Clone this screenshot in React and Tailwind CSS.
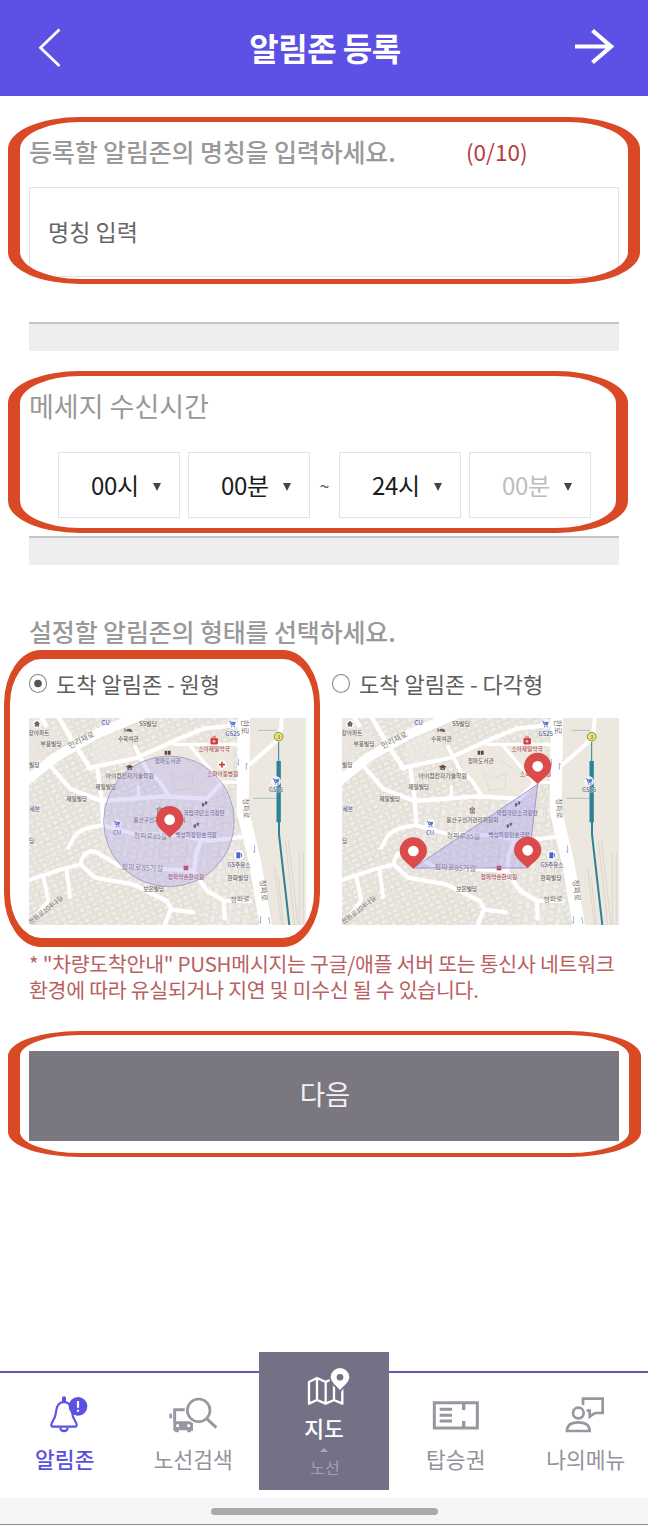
import React from "react";

const MAP_LABELS = [
  ["장아파트", 57, 68, 17, "#66605c"],
  ["부용빌딩", 93, 100, 17, "#66605c"],
  ["CU", 257, 37, 19, "#5561b5"],
  ["SS빌딩", 384, 41, 18, "#66605c"],
  ["수복여관", 325, 86, 17, "#66605c"],
  ["GS25", 638, 70, 18, "#5561a5"],
  ["소아제일약국", 582, 115, 17, "#a8504c"],
  ["청파도서관", 443, 153, 17, "#66605c"],
  ["소화아동병원", 608, 191, 17, "#a8504c"],
  ["아이컴전자기술학원", 329, 196, 17.5, "#66605c"],
  ["제일빌딩", 257, 231, 17, "#66605c"],
  ["제일빌딩", 170, 265, 17, "#66605c"],
  ["빌딩", 43, 163, 17, "#66605c"],
  ["세븐", 44, 297, 17, "#5a5f80"],
  ["국립극단소극장판", 552, 309, 17, "#5b5570"],
  ["용산구선거관리위원회", 418, 329, 17, "#66605c"],
  ["백성희장민호극장", 528, 373, 17, "#5b5570"],
  ["CU", 291, 368, 18, "#5561a5"],
  ["딩", 35, 392, 17, "#66605c"],
  ["청파약손한의원", 498, 499, 17, "#a0484f"],
  ["보은빌딩", 401, 537, 17, "#66605c"],
  ["GS주유소", 657, 463, 17, "#5a5f80"],
  ["한화빌딩", 654, 504, 17, "#66605c"],
  ["GS25", 768, 239, 17, "#5a5f80"],
];

const ROAD_LABELS = [
  ["만리재로", 184, 89, 23, -27],
  ["청파로85길", 391, 377, 21, 3],
  ["청파로85가길", 367, 472, 22, 3],
  ["청파로", 660, 567, 21, -4],
  ["한로", 676, 50, 24, 90],
  ["청파로", 678, 294, 22, 88],
  ["청파로", 731, 540, 23, 84],
  ["청원로104나길", 77, 599, 20, -38],
];

function Cart({ x, y }) {
  return (
    <g transform={`translate(${x} ${y})`}>
      <circle r="15" fill="#fff" opacity="0.85" />
      <path d="M-10 -8h4l3 11h9M-5 -5H9L6 2H-3z" fill="#4e66cf" stroke="#4e66cf" strokeWidth="2" />
      <circle cx="-2" cy="8" r="2" fill="#4e66cf" />
      <circle cx="6" cy="8" r="2" fill="#4e66cf" />
    </g>
  );
}

function Pin({ x, y }) {
  return (
    <g transform={`translate(${x} ${y})`}>
      <path d="M0 0C-10 -14 -41 -28 -41 -54A41 41 0 0 1 41 -54C41 -28 10 -14 0 0Z" fill="#db4b4b" />
      <circle cy="-54" r="16" fill="#fff" />
    </g>
  );
}

function MapView({ id, children, pins }) {
  return (
    <svg className="block h-[207px] w-[277px]" viewBox="27 23 831 621" preserveAspectRatio="none">
      <defs>
        <pattern id={id + "a"} width="42" height="34" patternUnits="userSpaceOnUse" patternTransform="rotate(-26)">
          <path d="M2 3h17v12H2zM22 2h17v14H22zM3 18h12v13H3zM18 19h21v12H18z" fill="#f0ede7" stroke="#d9d6cd" strokeWidth="2" />
        </pattern>
        <pattern id={id + "b"} width="48" height="40" patternUnits="userSpaceOnUse" patternTransform="rotate(8)">
          <path d="M3 3h20v15H3zM27 5h17v26H27zM4 22h19v14H4z" fill="#f0ede7" stroke="#d9d6cd" strokeWidth="2" />
        </pattern>
      </defs>
      <rect x="27" y="23" width="831" height="621" fill="#ebe8e0" />
      <rect x="27" y="23" width="831" height="621" fill={`url(#${id}a)`} />
      <path d="M250 270H640L690 644H560L520 500L250 450Z" fill="#ece9e2" />
      <path d="M250 270H640L690 644H560L520 500L250 450Z" fill={`url(#${id}b)`} />
      <path d="M390 130L470 95L640 110V215L590 255L450 255L390 190Z" fill="#ede8e0" />
      <path d="M690 23H858V644H745L690 380Z" fill="#ece7df" />
      <path d="M27 23H70L130 90L27 170Z" fill="#ebe7df" opacity="0.7" />
      <path d="M215 100L300 60L350 140L225 165Z" fill="#efebe4" opacity="0.6" />
      <g fill="none" stroke="#dcd8d0" strokeWidth="2.5">
        <path d="M450 185L475 205L520 190L515 235L470 240ZM500 150L540 175M415 400H500V440H420ZM560 400L600 395V440H560ZM590 290H640V340H600Z" />
      </g>
      <g fill="none" stroke="#fff" strokeLinejoin="round" strokeLinecap="round">
        <path d="M15 215L100 145L230 70L370 12" strokeWidth="29" />
        <path d="M672 10L668 300L706 460L740 660" strokeWidth="37" />
        <path d="M110 10L165 105L212 175M60 15L78 45" strokeWidth="14" />
        <path d="M205 173L350 143L470 88L550 55L665 42" strokeWidth="13" />
        <path d="M345 110L385 185Q415 200 445 255" strokeWidth="12" />
        <path d="M232 175L245 268L250 345M90 165L150 235L245 272L430 258L560 265L605 218" strokeWidth="13" />
        <path d="M462 102H655M512 108L602 215L660 217M355 262V228" strokeWidth="10" />
        <path d="M250 345Q190 350 165 375L145 412M250 345L340 370L480 375L565 392L665 380" strokeWidth="12" />
        <path d="M20 512L120 478L182 462Q185 425 222 422L300 468L520 482" strokeWidth="12" />
        <path d="M182 462L225 502L340 522L440 572L455 598L520 606M452 598L430 655M545 385L528 430L522 485L560 540L612 572L614 625" strokeWidth="13" />
        <path d="M690 162L776 86Q787 50 784 15M610 572H690M140 480L150 560M70 500L85 570L55 610" strokeWidth="12" />
      </g>
      <g fill="none" stroke="#c8c5c0" strokeWidth="1.5">
        <path d="M796 390L824 644M805 392L834 644M838 428V644M850 428V644M764 470L784 644M775 500L790 644" />
      </g>
      <g fill="none" stroke="#2b8395">
        <path d="M715 60H770M700 264H776" strokeWidth="1.6" opacity="0.65" />
        <path d="M776 95V370" strokeWidth="3" />
        <path d="M776 152V336" strokeWidth="13" />
        <path d="M777 335V372L808 644" strokeWidth="6" />
      </g>
      <circle cx="776" cy="79" r="13" fill="#e8e27d" stroke="#918d43" strokeWidth="3" />
      <text x="776" y="85" textAnchor="middle" fontSize="16" fill="#6b692f">3</text>
      <g stroke="#8da0d8" strokeWidth="2.5" fill="none">
        <path d="M655 145v20l-4-5M679 178v-20l4 5M704 405v22l-4-5M722 617v22l-4-5M746 620l4 20" />
      </g>
      {ROAD_LABELS.map(([t, x, y, s, r], i) => (
        <text key={i} transform={`translate(${x} ${y}) rotate(${r})`} y={s * 0.36} textAnchor="middle" fontSize={s} fill="#77736f">{t}</text>
      ))}
      {MAP_LABELS.map(([t, x, y, s, c], i) => (
        <text key={i} x={x} y={y + s * 0.36} textAnchor="middle" fontSize={s} fontWeight="500" fill={c} stroke="#fff" strokeWidth="2" strokeOpacity="0.7" paintOrder="stroke">{t}</text>
      ))}
      <Cart x={637} y={41} />
      <Cart x={768} y={213} />
      <Cart x={291} y={341} />
      <circle cx="657" cy="435" r="15" fill="#fff" />
      <path d="M650 427h10v16h-10zM662 430h3v11" fill="#4e66cf" stroke="#4e66cf" strokeWidth="2" />
      <circle cx="51" cy="41" r="13" fill="#fff" opacity="0.8" />
      <path d="M43 41L51 33L59 41M46 40V48H49V43H53V48H56V40" fill="#5b4a48" stroke="#5b4a48" strokeWidth="2" />
      <path d="M315 54V64M316 61H335V65M322 57H333V60H322Z" stroke="#7d5551" strokeWidth="3" fill="#7d5551" />
      <path d="M434 121H442V133H434ZM444 121H452V133H444Z" fill="#69403c" />
      <path d="M317 169L329 163L341 169L329 175ZM322 173V178H336V173" fill="#6e4842" />
      <path d="M573 85H592V101H573ZM577 80H588" fill="#d43c3c" stroke="#d43c3c" strokeWidth="3" />
      <path d="M582 88V98M577 93H587" stroke="#fff" strokeWidth="2" />
      <circle cx="606" cy="163" r="13" fill="#fff" />
      <path d="M606 154V172M597 163H615" stroke="#d43c3c" strokeWidth="5" />
      <path d="M410 296L418 291L426 296ZM411 308H426M413 297V307M418 297V307M423 297V307" stroke="#7d5551" strokeWidth="2.4" fill="none" />
      <g fill="#52406b">
        <path d="M545 279L553 278V287L547 290ZM555 273L563 274L560 283L555 282Z" />
        <path d="M520 343L528 342V351L522 354ZM530 337L538 338L535 347L530 346Z" />
      </g>
      <rect x="491" y="466" width="14" height="14" fill="#c93645" />
      {children}
      {pins.map(([x, y], i) => <Pin key={i} x={x} y={y} />)}
    </svg>
  );
}

function Select({ value, muted, className = "" }) {
  return (
    <div className={"flex h-[66px] w-[122px] items-center border border-[#e3e3e3] pl-[32px] text-[24px] " + className}>
      <span className={"w-[48px] whitespace-nowrap tracking-[-0.3px] " + (muted ? "text-[#bdbdbd]" : "text-[#1c1c1c]")}>{value}</span>
      <svg className="ml-[14px] mt-[3px] h-[8px] w-[8px]" viewBox="0 0 8 8"><path d="M0 0H8L4 8Z" fill="#444" /></svg>
    </div>
  );
}

function Radio({ checked, children }) {
  return (
    <label className="flex h-[26px] flex-1 items-center">
      <svg className="h-[20px] w-[18px]" viewBox="0 0 18 20">
        <ellipse cx="9" cy="9.500" rx="8.500" ry="9" fill="#fff" stroke="#8b8b8b" strokeWidth="1.1" />
        {checked && <circle cx="9" cy="9.500" r="3.800" fill="#555" />}
      </svg>
      <span className="-mt-[2px] ml-[9px] whitespace-nowrap text-[22px] leading-[26px] text-[#5e5e5e]">{children}</span>
    </label>
  );
}

function Tab({ label, active, nudge = "", children }) {
  return (
    <div className="mt-[19px] flex flex-1 flex-col items-center border-t-2 border-[#6258b4]">
      <div className={"flex flex-col items-center " + nudge}>
        <div className="mt-[20px] flex h-[44px] items-center justify-center">{children}</div>
        <span className={"mt-[6px] whitespace-nowrap text-[21.500px] leading-[32px] " + (active ? "font-medium text-[#5b50e0]" : "text-[#94929c]")}>{label}</span>
      </div>
    </div>
  );
}

export default function App() {
  return (
    <div className="relative flex h-[1525px] w-[648px] flex-col overflow-hidden bg-white font-['Noto_Sans_CJK_KR',sans-serif]">
      <header className="flex h-[96px] shrink-0 items-center justify-between bg-[#5d50e5] pl-[38px] pr-[34px]">
        <svg className="h-[40px] w-[24px]" viewBox="38 27 24 40" fill="none"><path d="M59.500 28.500L40.500 46.800L59.500 65" stroke="#fff" strokeWidth="2.800" /></svg>
        <h1 className="-mt-[3px] ml-[14px] whitespace-nowrap text-[32px] font-bold leading-[48px] tracking-[-0.500px] text-white">알림존 등록</h1>
        <svg className="-mt-[2px] h-[40px] w-[40px]" viewBox="574 27 40 40" fill="none"><path d="M575 46.500H611M592.500 30.500L611 46.500L592.500 62.500" stroke="#fff" strokeWidth="4.200" /></svg>
      </header>

      <main className="flex flex-col px-[29px] pt-[40px]">
        <div className="flex h-[30px] items-center">
          <h2 className="w-[437px] whitespace-nowrap text-[25px] font-medium leading-[30px] tracking-[-0.150px] text-[#999]">등록할 알림존의 명칭을 입력하세요.</h2>
          <span className="text-[22.500px] leading-[30px] text-[#b93a3c]">(0/10)</span>
        </div>
        <div className="mt-[21px] flex h-[90px] items-center border border-[#e3e3e3] pb-[2px] pl-[18px] text-[23px] text-[#666]">명칭 입력</div>
        <div className="mt-[45px] h-[29px] border-t-2 border-[#c6c6c6] bg-[#eee]" />
        <h2 className="mt-[40px] h-[30px] whitespace-nowrap text-[27px] leading-[30px] text-[#999]">메세지 수신시간</h2>
        <div className="mt-[31px] flex items-center pl-[29px]">
          <Select value="00시" />
          <Select value="00분" className="ml-[8px]" />
          <span className="w-[29px] text-center text-[18px] text-[#555]">~</span>
          <Select value="24시" />
          <Select value="00분" muted className="ml-[8px]" />
        </div>
        <div className="mt-[18px] h-[29px] border-t-2 border-[#c6c6c6] bg-[#eee]" />
        <h2 className="mt-[51px] h-[30px] whitespace-nowrap text-[25px] font-medium leading-[30px] tracking-[-0.150px] text-[#999]">설정할 알림존의 형태를 선택하세요.</h2>
        <div className="mt-[25px] flex gap-[16px]">
          <Radio checked>도착 알림존 - 원형</Radio>
          <Radio>도착 알림존 - 다각형</Radio>
        </div>
        <div className="mt-[21px] flex justify-between">
          <MapView id="circle" pins={[[449, 382]]}>
            <circle cx="447" cy="333" r="196" fill="#a89af0" fillOpacity="0.3" stroke="#9c98c8" strokeWidth="2.500" />
          </MapView>
          <MapView id="poly" pins={[[241, 476], [584, 474], [614, 222]]}>
            <path d="M241 473L614 222L584 473Z" fill="#a295ee" fillOpacity="0.36" stroke="#9089cb" strokeWidth="2.500" />
          </MapView>
        </div>
        <p className="mt-[25px] h-[52px] whitespace-nowrap text-[20.500px] leading-[26px] tracking-[-0.250px] text-[#b9615f]">
          * "차량도착안내" PUSH메시지는 구글/애플 서버 또는 통신사 네트워크<br />환경에 따라 유실되거나 지연 및 미수신 될 수 있습니다.
        </p>
        <button className="mt-[49px] h-[90px] bg-[#7b7780] pb-[4px] pl-[2px] text-[27.500px] text-[#f1f1f1]">다음</button>
      </main>

      <nav className="mt-[211px] flex h-[146px] shrink-0">
        <Tab label="알림존" active>
          <svg className="ml-[9px] h-[38px] w-[40px]" viewBox="148 167 120 114" fill="none">
            <path d="M193 174V186" stroke="#5b50e0" strokeWidth="12" strokeLinecap="round" />
            <path d="M193 185C176 186 170 198 169 215C168 237 155 244 155 253Q155 259 161 259H225Q231 259 231 253C231 244 218 237 217 215C216 198 210 186 193 185Z" stroke="#5b50e0" strokeWidth="6.500" fill="#fff" />
            <path d="M182 262A11 10 0 0 0 204 262" stroke="#5b50e0" strokeWidth="7" />
            <circle cx="235" cy="198" r="28" fill="#5b50e0" />
            <path d="M235 182V202M235 208V214" stroke="#fff" strokeWidth="6.500" />
          </svg>
        </Tab>
        <Tab label="노선검색" nudge="-ml-[2px]">
          <svg className="h-[38px] w-[50px]" viewBox="501 167 150 114" fill="none" stroke="#9897a1">
            <path d="M552 208H521V244" strokeWidth="9" />
            <path d="M505 220H513V234H505Z" fill="#9897a1" stroke="none" />
            <path d="M517 243H576V271H570V276H559V270H533V276H522V271H517Z" fill="#9897a1" stroke="none" />
            <circle cx="530" cy="256" r="5" fill="#fff" stroke="none" />
            <circle cx="563" cy="256" r="5" fill="#fff" stroke="none" />
            <circle cx="593" cy="210" r="42" fill="#fff" stroke="none" />
            <circle cx="593" cy="210" r="34" strokeWidth="8" />
            <path d="M617 235L646 262" strokeWidth="9" />
          </svg>
        </Tab>
        <div className="flex h-[138px] w-[130px] shrink-0 flex-col items-center bg-[#747186]">
          <svg className="ml-[7px] mt-[14px] h-[42px] w-[44px]" viewBox="915 78 132 126" fill="none">
            <path d="M924 126L948 114L974 126L999 114L1024 126V191L999 180L974 191L948 180L924 191ZM948 114V180M974 126V191M999 114V180" stroke="#fff" strokeWidth="7" strokeLinejoin="round" />
            <path d="M1017 160C1009 145 984 132 984 112A33 33 0 0 1 1050 112C1050 132 1025 145 1017 160Z" fill="#747186" />
            <path d="M1017 151C1009 139 989 127 989 112A28 28 0 0 1 1045 112C1045 127 1025 139 1017 151Z" fill="#fff" />
            <circle cx="1017" cy="112" r="10" fill="#747186" />
          </svg>
          <span className="mt-[5px] text-[21.500px] font-medium leading-[30px] text-white">지도</span>
          <svg className="mt-[5px] h-[4px] w-[8px]" viewBox="0 0 8 4"><path d="M0 4L4 0L8 4Z" fill="#a9a7b5" /></svg>
          <span className="ml-[2px] mt-[4px] text-[16px] leading-[22px] text-[#a3a1af]">노선</span>
        </div>
        <Tab label="탑승권" nudge="ml-[4px]">
          <svg className="h-[30px] w-[48px]" viewBox="336 177 144 90" fill="none" stroke="#9897a1">
            <path d="M343 185H472V261H343Z" strokeWidth="9" />
            <path d="M431 189V207M431 240V258" strokeWidth="10" />
            <path d="M359 205H396M359 223H396M359 240H396" strokeWidth="9" />
          </svg>
        </Tab>
        <Tab label="나의메뉴" nudge="ml-[5px]">
          <svg className="-ml-[2px] h-[38px] w-[40px]" viewBox="732 167 120 114" fill="none" stroke="#9897a1">
            <path d="M786 194V175H845V218H822L806 229V211H797" strokeWidth="8" />
            <circle cx="772" cy="218" r="16" strokeWidth="8" />
            <path d="M738 272Q738 246 772 246Q806 246 806 272Z" strokeWidth="8" />
          </svg>
        </Tab>
      </nav>
      <div className="flex h-[27px] shrink-0 justify-center border-b border-[#8b8b8b] bg-[#f5f5f8] pt-[10px]">
        <div className="h-[7px] w-[227px] rounded-full bg-[#a9a9a9]" />
      </div>

      <div className="pointer-events-none absolute left-[8px] top-[117px] h-[167px] w-[632px] rounded-[72px/32px] border-x-[12px] border-y-[5px] border-[#d94925]" />
      <div className="pointer-events-none absolute left-[8px] top-[371px] h-[162px] w-[620px] rounded-[72px/32px] border-x-[12px] border-y-[5px] border-[#d94925]" />
      <div className="pointer-events-none absolute left-[4px] top-[650px] h-[297px] w-[316px] rounded-[37px/54px] border-x-[6px] border-y-[9px] border-[#d94925]" />
      <div className="pointer-events-none absolute left-[8px] top-[1031px] h-[126px] w-[633px] rounded-[72px/25px] border-x-[12px] border-y-[4px] border-[#d94925]" />
    </div>
  );
}
